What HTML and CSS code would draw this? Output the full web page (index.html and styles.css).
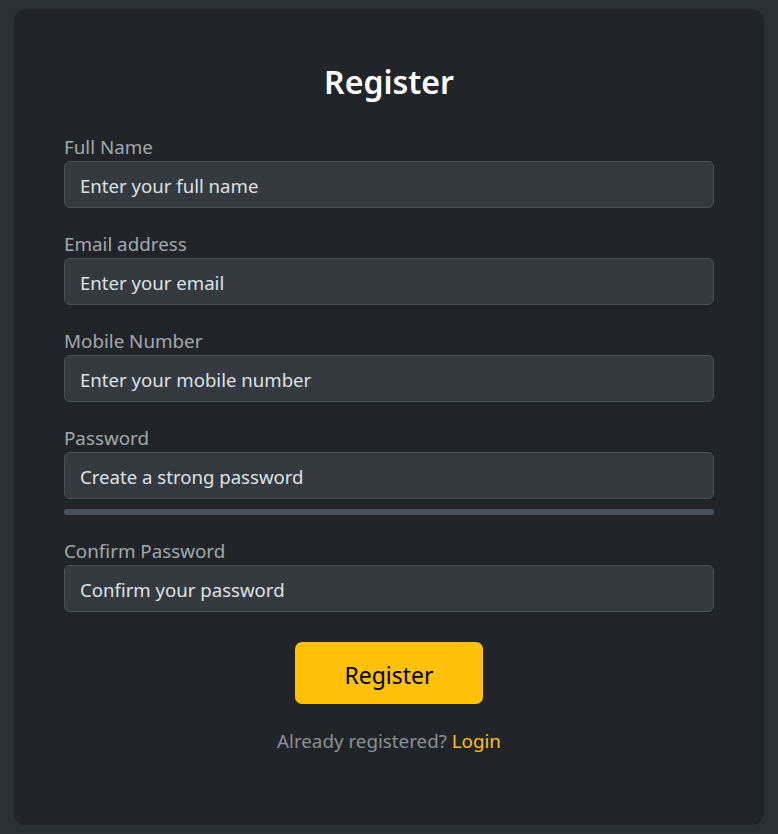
FILE: index.html
```html
<!DOCTYPE html>
<html lang="en">
<head>
<meta charset="utf-8">
<title>Register</title>
<link rel="stylesheet" href="styles.css">
</head>
<body>
<main class="card">
  <h2 class="title">Register</h2>
  <form class="form">
    <div class="field">
      <label class="label" for="name">Full Name</label>
      <input class="input" id="name" type="text" placeholder="Enter your full name">
    </div>
    <div class="field">
      <label class="label" for="email">Email address</label>
      <input class="input" id="email" type="email" placeholder="Enter your email">
    </div>
    <div class="field">
      <label class="label" for="mobile">Mobile Number</label>
      <input class="input" id="mobile" type="tel" placeholder="Enter your mobile number">
    </div>
    <div class="field">
      <label class="label" for="pw">Password</label>
      <input class="input" id="pw" type="password" placeholder="Create a strong password">
      <div class="strength"></div>
    </div>
    <div class="field">
      <label class="label" for="pw2">Confirm Password</label>
      <input class="input" id="pw2" type="password" placeholder="Confirm your password">
    </div>
    <div class="actions">
      <button class="btn" type="button">Register</button>
    </div>
    <p class="footer">Already registered? <a class="link" href="#">Login</a></p>
  </form>
</main>
</body>
</html>
```
FILE: styles.css
```css
* { box-sizing: border-box; }
html, body { margin: 0; }
body {
  background: #2b3035;
  padding: 9px 14px;
  font-family: "Noto Sans", "Open Sans", sans-serif;
  color: #dee2e6;
  min-height: 834px;
}
.card {
  background: #212529;
  border-radius: 12px;
  padding: 54px 50px 70px;
  height: 816px;
}
.title {
  margin: 0 0 32px;
  text-align: center;
  font-size: 32px;
  line-height: 38px;
  font-weight: 600;
  color: #ffffff;
}
.form { margin: 0; }
.field { margin-bottom: 22px; }
.label {
  display: block;
  font-size: 18.8px;
  line-height: 28px;
  color: #a3a8ad;
}
.input {
  display: block;
  width: 100%;
  height: 47px;
  padding: 2px 15px 0;
  background: #343a40;
  border: 1px solid #4b5157;
  border-radius: 6px;
  font-family: inherit;
  font-size: 18.6px;
  color: #dee2e6;
  outline: none;
}
.input::placeholder { color: #dee2e6; opacity: 1; }
.strength {
  margin-top: 10px;
  height: 6px;
  border-radius: 3px;
  background: #495057;
}
.actions {
  display: flex;
  justify-content: center;
  margin-top: 30px;
}
.btn {
  background: #ffc107;
  border: none;
  border-radius: 7px;
  width: 188px;
  height: 62px;
  padding: 3px 0 0;
  font-family: inherit;
  font-size: 23px;
  color: #000;
  cursor: pointer;
}
.footer {
  margin: 23px 0 0;
  text-align: center;
  font-size: 18.8px;
  line-height: 28px;
  color: #8c9196;
}
.link { color: #ffc107; text-decoration: none; }
```
